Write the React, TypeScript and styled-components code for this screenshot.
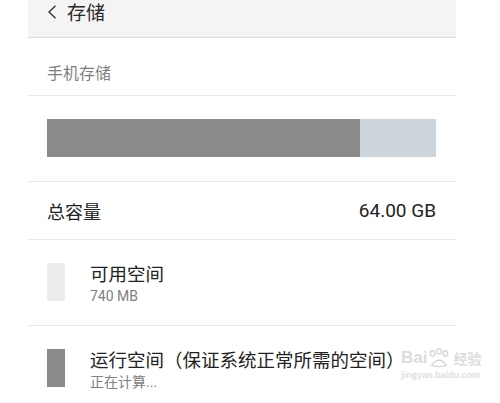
import React from "react";
import styled, { createGlobalStyle } from "styled-components";

const Global = createGlobalStyle`
  html, body { margin: 0; padding: 0; background: #ffffff; }
  body { font-family: Roboto, "Noto Sans CJK SC", sans-serif; }
`;

const Page = styled.div`
  position: relative;
  width: 500px;
  height: 403px;
  overflow: hidden;
  background: #ffffff;
`;

const Column = styled.div`
  margin-left: 28px;
  width: 428px;
  display: flex;
  flex-direction: column;
`;

const Header = styled.div`
  height: 37px;
  background: #f4f4f4;
  border-bottom: 1px solid #dadada;
  display: flex;
  align-items: flex-start;
  padding-left: 19px;
  gap: 10px;
  box-sizing: content-box;
`;

const Back = styled.svg`
  margin-top: 5px;
  width: 10px;
  height: 14px;
`;

const HeaderTitle = styled.div`
  font-family: "Noto Sans CJK SC", sans-serif;
  font-size: 19px;
  line-height: 24px;
  color: #2a2a2a;
`;

const Block = styled.div<{ $pt: number; $pb: number; $line?: boolean }>`
  padding: ${(p) => p.$pt}px 20px ${(p) => p.$pb}px 19px;
  border-bottom: ${(p) => (p.$line ? "1px solid #e8e8e8" : "none")};
`;

const SectionLabel = styled.div`
  font-family: "Noto Sans CJK SC", sans-serif;
  font-size: 16px;
  line-height: 20px;
  color: #7f7f7f;
`;

const Bar = styled.div`
  display: flex;
  height: 38px;
`;

const BarPart = styled.div<{ $color: string }>`
  background: ${(p) => p.$color};
  height: 100%;
`;

const TotalRow = styled.div`
  display: flex;
  justify-content: space-between;
  align-items: center;
  line-height: 24px;
`;

const TotalLabel = styled.div`
  font-family: "Noto Sans CJK SC", sans-serif;
  font-size: 18px;
  color: #222222;
`;

const TotalValue = styled.div`
  font-family: Roboto, sans-serif;
  font-size: 19px;
  color: #222222;
`;

const Item = styled.div`
  display: grid;
  grid-template-columns: 18px 1fr;
  column-gap: 25px;
  align-items: start;
`;

const Swatch = styled.div<{ $color: string }>`
  margin-top: 2px;
  width: 18px;
  height: 38px;
  background: ${(p) => p.$color};
`;

const ItemText = styled.div`
  display: flex;
  flex-direction: column;
  gap: 2px;
`;

const ItemTitle = styled.div`
  font-family: "Noto Sans CJK SC", sans-serif;
  font-size: 18.5px;
  line-height: 24px;
  color: #222222;
  white-space: nowrap;
`;

const ItemSub = styled.div`
  font-family: Roboto, "Noto Sans CJK SC", sans-serif;
  font-size: 14px;
  line-height: 18px;
  color: #808080;
`;

const Watermark = styled.div`
  position: absolute;
  left: 401px;
  top: 348px;
  display: flex;
  flex-direction: column;
  align-items: flex-start;
  color: rgba(205, 205, 205, 0.7);
  pointer-events: none;
`;

const WmTop = styled.div`
  display: flex;
  align-items: flex-end;
  font-family: "Liberation Sans", sans-serif;
  font-weight: bold;
  font-size: 17px;
  line-height: 20px;
`;

const WmCjk = styled.span`
  font-family: "Noto Sans CJK SC", sans-serif;
  font-size: 14px;
  margin-left: 2px;
`;

const WmUrl = styled.div`
  font-family: "Liberation Sans", sans-serif;
  font-weight: bold;
  font-size: 9px;
  line-height: 14px;
`;

const items = [
  { color: "#ececec", title: "可用空间", sub: "740 MB" },
  { color: "#8a8a8a", title: "运行空间（保证系统正常所需的空间）", sub: "正在计算..." },
];

export default function App() {
  return (
    <Page>
      <Global />
      <Column>
        <Header>
          <Back viewBox="0 0 10 14">
            <polyline points="8.5,0.8 2,7 8.5,13.2" fill="none" stroke="#333" strokeWidth="1.4" />
          </Back>
          <HeaderTitle>存储</HeaderTitle>
        </Header>
        <Block $pt={24} $pb={13} $line>
          <SectionLabel>手机存储</SectionLabel>
        </Block>
        <Block $pt={23} $pb={24} $line>
          <Bar>
            <BarPart $color="#8a8a8a" style={{ width: `${(313 / 389) * 100}%` }} />
            <BarPart $color="#cdd5dc" style={{ flex: 1 }} />
          </Bar>
        </Block>
        <Block $pt={17} $pb={16} $line>
          <TotalRow>
            <TotalLabel>总容量</TotalLabel>
            <TotalValue>64.00 GB</TotalValue>
          </TotalRow>
        </Block>
        {items.map((it, i) => (
          <Block key={i} $pt={21} $pb={20} $line={i === 0}>
            <Item>
              <Swatch $color={it.color} />
              <ItemText>
                <ItemTitle>{it.title}</ItemTitle>
                <ItemSub>{it.sub}</ItemSub>
              </ItemText>
            </Item>
          </Block>
        ))}
      </Column>
      <Watermark>
        <WmTop>
          Bai
          <svg width="24" height="20" viewBox="0 0 26 22">
            <g fill="none" stroke="rgba(205,205,205,0.8)" strokeWidth="1.5">
              <ellipse cx="6" cy="6" rx="2.5" ry="3" />
              <ellipse cx="13" cy="3.5" rx="2.5" ry="3" />
              <ellipse cx="20" cy="6" rx="2.5" ry="3" />
              <path d="M5 19 Q13 8 21 19 Q13 22 5 19 Z" />
            </g>
          </svg>
          <WmCjk>经验</WmCjk>
        </WmTop>
        <WmUrl>jingyan.baidu.com</WmUrl>
      </Watermark>
    </Page>
  );
}
